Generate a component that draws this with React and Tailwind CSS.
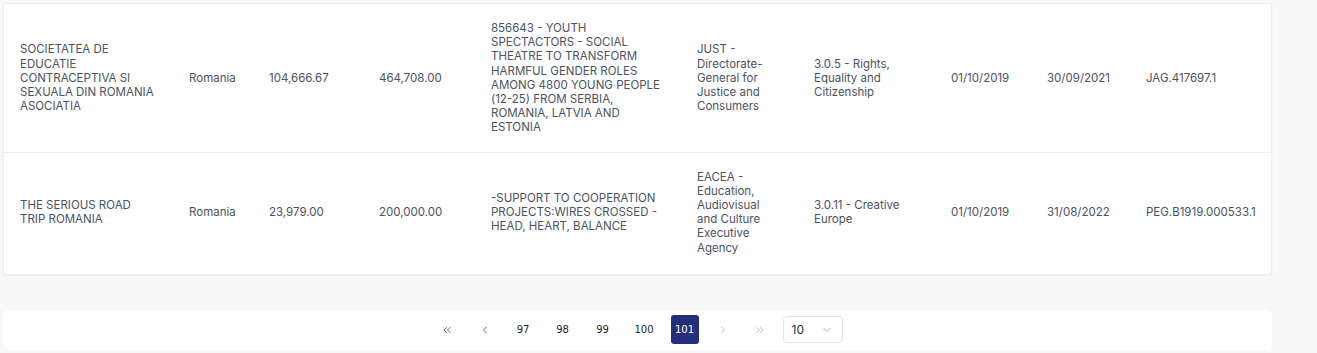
import React from 'react';
import { ChevronLeft, ChevronRight, ChevronsLeft, ChevronsRight, ChevronDown } from 'lucide-react';

const rows = [
  {
    name: 'SOCIETATEA DE EDUCATIE CONTRACEPTIVA SI SEXUALA DIN ROMANIA ASOCIATIA',
    country: 'Romania',
    amount: '104,666.67',
    total: '464,708.00',
    project:
      '856643 - YOUTH SPECTACTORS - SOCIAL THEATRE TO TRANSFORM HARMFUL GENDER ROLES AMONG 4800 YOUNG PEOPLE (12-25) FROM SERBIA, ROMANIA, LATVIA AND ESTONIA',
    agency: 'JUST - Directorate-General for Justice and Consumers',
    budget: '3.0.5 - Rights, Equality and Citizenship',
    start: '01/10/2019',
    end: '30/09/2021',
    ref: 'JAG.417697.1'
  },
  {
    name: 'THE SERIOUS ROAD TRIP ROMANIA',
    country: 'Romania',
    amount: '23,979.00',
    total: '200,000.00',
    project: '-SUPPORT TO COOPERATION PROJECTS:WIRES CROSSED - HEAD, HEART, BALANCE',
    agency: 'EACEA - Education, Audiovisual and Culture Executive Agency',
    budget: '3.0.11 - Creative Europe',
    start: '01/10/2019',
    end: '31/08/2022',
    ref: 'PEG.B1919.000533.1'
  }
];

const columns = [
  { key: 'name', width: 'w-[169px]' },
  { key: 'country', width: 'w-[80px]' },
  { key: 'amount', width: 'w-[110px]' },
  { key: 'total', width: 'w-[112px]' },
  { key: 'project', width: 'w-[206px]' },
  { key: 'agency', width: 'w-[117px]' },
  { key: 'budget', width: 'w-[137px]' },
  { key: 'start', width: 'w-[96px]' },
  { key: 'end', width: 'w-[99px]' },
  { key: 'ref', width: 'w-[141px]' }
];

const PageButton = ({ children, width, active }) => (
  <button
    className={`h-[29px] ${width} flex items-center justify-center rounded-[3px] text-[10px] ${
      active ? 'bg-[#242e7b] text-white' : 'text-[#1f2330]'
    }`}
    style={{ fontFamily: '"DejaVu Sans", sans-serif' }}
  >
    {children}
  </button>
);

export default function App() {
  return (
    <div
      className="min-h-[353px] w-full bg-[#f8f8f9] px-[3px] pt-[3px] pb-[4px]"
      style={{ fontFamily: 'Inter, "Noto Sans", sans-serif' }}
    >
      {/* Table card */}
      <div className="w-[1269px] bg-white border border-[#eceef2] shadow-[0_1px_2px_rgba(0,0,0,0.04)]">
        <table className="table-fixed w-[1267px] border-collapse">
          <colgroup>
            {columns.map((c) => (
              <col key={c.key} className={c.width} />
            ))}
          </colgroup>
          <tbody>
            {rows.map((row, i) => (
              <tr key={i} className={i < rows.length - 1 ? 'border-b border-[#eceef2]' : ''}>
                {columns.map((c) => (
                  <td
                    key={c.key}
                    className={`px-4 align-middle text-[11.5px] leading-[14.2px] text-[#4b5262] ${
                      i === 0 ? 'py-[17px]' : 'pt-[17px] pb-[19px]'
                    }`}
                  >
                    {row[c.key]}
                  </td>
                ))}
              </tr>
            ))}
          </tbody>
        </table>
      </div>

      {/* Pagination */}
      <div className="mt-[35px] w-[1269px] h-[40px] bg-white rounded-[6px] flex items-center justify-center">
        <div className="flex items-center gap-[10px]">
          <PageButton width="w-[28px]">
            <ChevronsLeft size={12} strokeWidth={2} className="text-[#5f6c92]" />
          </PageButton>
          <PageButton width="w-[28px]">
            <ChevronLeft size={12} strokeWidth={2} className="text-[#5f6c92]" />
          </PageButton>
          <PageButton width="w-[29px]">97</PageButton>
          <PageButton width="w-[30px]">98</PageButton>
          <PageButton width="w-[30px]">99</PageButton>
          <PageButton width="w-[33px]">100</PageButton>
          <PageButton width="w-[28px]" active>101</PageButton>
          <PageButton width="w-[28px]">
            <ChevronRight size={12} strokeWidth={2} className="text-[#b9bfce]" />
          </PageButton>
          <PageButton width="w-[26px]">
            <ChevronsRight size={12} strokeWidth={2} className="text-[#b9bfce]" />
          </PageButton>
          <div className="h-[27px] w-[60px] border border-[#dfe3ea] rounded-[4px] flex items-center justify-between pl-[8px] pr-[9px] text-[12px] text-[#2a2f3b]">
            <span>10</span>
            <ChevronDown size={12} strokeWidth={1.75} className="text-[#9aa1b0]" />
          </div>
        </div>
      </div>
    </div>
  );
}
